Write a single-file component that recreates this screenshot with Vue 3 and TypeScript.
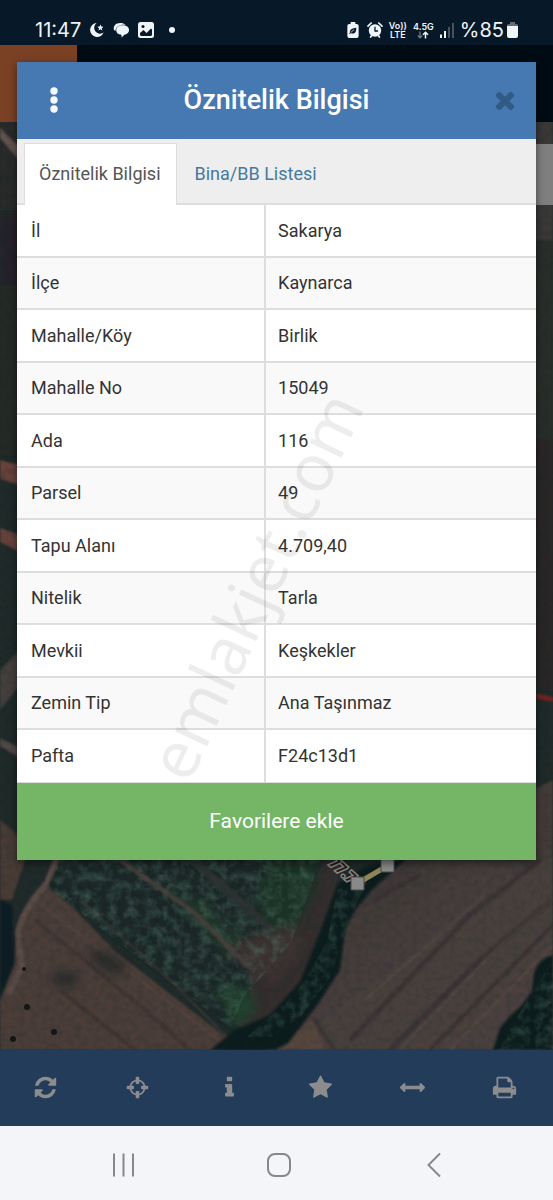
<script setup lang="ts">
interface Attribute {
  label: string
  value: string
}

interface Tool {
  name: string
  path: string
}

const attributes: Attribute[] = [
  { label: 'İl', value: 'Sakarya' },
  { label: 'İlçe', value: 'Kaynarca' },
  { label: 'Mahalle/Köy', value: 'Birlik' },
  { label: 'Mahalle No', value: '15049' },
  { label: 'Ada', value: '116' },
  { label: 'Parsel', value: '49' },
  { label: 'Tapu Alanı', value: '4.709,40' },
  { label: 'Nitelik', value: 'Tarla' },
  { label: 'Mevkii', value: 'Keşkekler' },
  { label: 'Zemin Tip', value: 'Ana Taşınmaz' },
  { label: 'Pafta', value: 'F24c13d1' },
]

const tools: Tool[] = [
  {
    name: 'Yenile',
    path: 'M1639 1056q0 5-1 7-64 268-268 434.5t-478 166.5q-146 0-282.5-55t-243.5-157l-129 129q-19 19-45 19t-45-19-19-45v-448q0-26 19-45t45-19h448q26 0 45 19t19 45-19 45l-137 137q71 66 161 102t187 36q134 0 250-65t186-179q11-17 53-117 8-23 30-23h192q13 0 22.5 9.5t9.5 22.5zm25-800v448q0 26-19 45t-45 19h-448q-26 0-45-19t-19-45 19-45l138-138q-148-137-349-137-134 0-250 65t-186 179q-11 17-53 117-8 23-30 23h-199q-13 0-22.5-9.5t-9.5-22.5v-7q65-268 270-434.5t480-166.5q146 0 284 55.5t245 156.5l130-129q19-19 45-19t45 19 19 45z',
  },
  {
    name: 'Konum',
    path: 'M1325 1024h-109q-26 0-45-19t-19-45v-128q0-26 19-45t45-19h109q-32-108-112.5-188.5t-188.5-112.5v109q0 26-19 45t-45 19h-128q-26 0-45-19t-19-45v-109q-108 32-188.5 112.5t-112.5 188.5h109q26 0 45 19t19 45v128q0 26-19 45t-45 19h-109q32 108 112.5 188.5t188.5 112.5v-109q0-26 19-45t45-19h128q26 0 45 19t19 45v109q108-32 188.5-112.5t112.5-188.5zm339-192v128q0 26-19 45t-45 19h-143q-37 161-154.5 278.5t-278.5 154.5v143q0 26-19 45t-45 19h-128q-26 0-45-19t-19-45v-143q-161-37-278.5-154.5t-154.5-278.5h-143q-26 0-45-19t-19-45v-128q0-26 19-45t45-19h143q37-161 154.5-278.5t278.5-154.5v-143q0-26 19-45t45-19h128q26 0 45 19t19 45v143q161 37 278.5 154.5t154.5 278.5h143q26 0 45 19t19 45z',
  },
  {
    name: 'Bilgi',
    path: 'M1216 1344v128q0 26-19 45t-45 19h-512q-26 0-45-19t-19-45v-128q0-26 19-45t45-19h64v-384h-64q-26 0-45-19t-19-45v-128q0-26 19-45t45-19h384q26 0 45 19t19 45v576h64q26 0 45 19t19 45zm-128-1152v192q0 26-19 45t-45 19h-256q-26 0-45-19t-19-45v-192q0-26 19-45t45-19h256q26 0 45 19t19 45z',
  },
  {
    name: 'Favoriler',
    path: 'M1728 647q0 22-26 48l-363 354 86 500q1 7 1 20 0 21-10.5 35.5t-30.5 14.5q-19 0-40-12l-449-236-449 236q-22 12-40 12-21 0-31.5-14.5t-10.5-35.5q0-6 2-20l86-500-364-354q-25-27-25-48 0-37 56-46l502-73 225-455q19-41 49-41t49 41l225 455 502 73q56 9 56 46z',
  },
  {
    name: 'Ölçüm',
    path: 'M1792 896q0 26-19 45l-256 256q-19 19-45 19t-45-19-19-45v-128h-1024v128q0 26-19 45t-45 19-45-19l-256-256q-19-19-19-45t19-45l256-256q19-19 45-19t45 19 19 45v128h1024v-128q0-26 19-45t45-19 45 19l256 256q19 19 19 45z',
  },
  {
    name: 'Yazdır',
    path: 'M448 1536h896v-256h-896v256zm0-640h896v-384h-160q-40 0-68-28t-28-68v-160h-640v640zm1152 64q0-26-19-45t-45-19-45 19-19 45 19 45 45 19 45-19 19-45zm128 0v416q0 13-9.5 22.5t-22.5 9.5h-224v160q0 40-28 68t-68 28h-960q-40 0-68-28t-28-68v-160h-224q-13 0-22.5-9.5t-9.5-22.5v-416q0-79 56.5-135.5t135.5-56.5h64v-544q0-40 28-68t68-28h672q40 0 88 20t76 48l152 152q28 28 48 76t20 88v256h64q79 0 135.5 56.5t56.5 135.5z',
  },
]
</script>

<template>
  <div class="screen">
    <header class="status">
      <div class="status-group">
        <span class="clock">11:47</span>
        <svg class="status-icon first" viewBox="0 0 16 16" aria-hidden="true">
          <path d="M7.600 1A7 7 0 1 0 14.600 10.600 5.400 5.400 0 0 1 7.600 1z" fill="#eef4f8" />
          <path d="M11.400 2.600l.9 2 2.200.2-1.700 1.400.5 2.200-1.900-1.200-1.900 1.200.5-2.200-1.700-1.400 2.200-.2z" fill="#eef4f8" />
        </svg>
        <svg class="status-icon wide" viewBox="0 0 18 16" aria-hidden="true">
          <path d="M1 8C0 3.500 3 .6 7.500.6c2.500 0 4.500.7 5.800 2C8 1.600 3 3.800 2.600 9z" fill="#eef4f8" />
          <path d="M10 3c4.200 0 7 2 7 5s-2.500 4.600-5 5l-2.800 3-.4-3C5.500 12.700 3.400 11 3.400 8.200 3.400 5 6.200 3 10 3z" fill="#eef4f8" />
        </svg>
        <svg class="status-icon" viewBox="0 0 16 16" aria-hidden="true">
          <rect width="16" height="16" rx="2.500" fill="#eef4f8" />
          <path d="M2 12.500V11l3.500-3 3 3L13 6.500l1 1v5a1.500 1.500 0 0 1-1.500 1.500h-9A1.500 1.500 0 0 1 2 12.500z" fill="#071829" />
          <circle cx="5" cy="4.600" r="1.500" fill="#071829" />
        </svg>
        <span class="more-dot"></span>
      </div>
      <div class="status-group right">
        <svg class="saver" viewBox="0 0 12 17" aria-hidden="true">
          <path d="M3.500 0h5v2H10a2 2 0 0 1 2 2v11a2 2 0 0 1-2 2H2a2 2 0 0 1-2-2V4a2 2 0 0 1 2-2h1.500z" fill="#eef4f8" />
          <path d="M9.500 6c0 4-1 6.200-4 6.200-.8 0-1.500-.2-2-.6L2.500 13l-.6-.7 1-1.200C2.300 8 5 6.500 9.500 6z" fill="#071829" />
          <path d="M3.800 11l3.500-3" stroke="#eef4f8" stroke-width=".8" />
        </svg>
        <svg class="alarm" viewBox="0 0 16 16" aria-hidden="true">
          <circle cx="8" cy="8.500" r="6.200" fill="#eef4f8" />
          <path d="M1 4.200L4.200 1M15 4.200L11.800 1M3.600 15l1.500-2M12.400 15l-1.500-2" stroke="#eef4f8" stroke-width="1.700" stroke-linecap="round" />
          <path d="M8 4.800V9h3" fill="none" stroke="#071829" stroke-width="1.300" />
        </svg>
        <span class="volte"><span>Vo))</span><span>LTE</span></span>
        <span class="network">
          <span>4.5G</span>
          <svg viewBox="0 0 12 7" aria-hidden="true">
            <path d="M3 0v6M.8 4L3 6.300 5.200 4" fill="none" stroke="#75818c" stroke-width="1.200" />
            <path d="M8.500 7V1M6 3.200L8.500.8 11 3.200" fill="none" stroke="#eef4f8" stroke-width="1.500" />
          </svg>
        </span>
        <svg class="signal" viewBox="0 0 14 15" aria-hidden="true">
          <path d="M0 11.500h2V15H0zM4 8h2v7H4z" fill="#eef4f8" />
          <path d="M8 4h2v11H8zM12 0h2v15h-2z" fill="#46525e" />
        </svg>
        <span class="charge">%85</span>
        <svg class="battery" viewBox="0 0 11 16" aria-hidden="true">
          <path d="M3 0h5v2h1.500A1.500 1.500 0 0 1 11 3.500V5H0V3.500A1.500 1.500 0 0 1 1.500 2H3z" fill="#626a72" />
          <path d="M0 4h11v10a2 2 0 0 1-2 2H2a2 2 0 0 1-2-2z" fill="#eef4f8" />
        </svg>
      </div>
    </header>

    <main class="stage">
      <svg class="map" viewBox="0 45 553 1005" preserveAspectRatio="xMidYMid slice" aria-hidden="true">
        <defs>
          <filter id="grain" x="0" y="0" width="100%" height="100%">
            <feTurbulence type="fractalNoise" baseFrequency=".16" numOctaves="4" seed="8" />
            <feColorMatrix values="0 0 0 0 0  0 0 0 0 0.02  0 0 0 0 0.02  1.800 0 0 0 -.7" />
          </filter>
          <filter id="leaves" x="0" y="0" width="100%" height="100%">
            <feTurbulence type="fractalNoise" baseFrequency=".11" numOctaves="3" seed="3" />
            <feColorMatrix values="0 0 0 0 .1  0 0 0 0 .22  0 0 0 0 .16  0 2 0 0 -.75" />
            <feComposite in2="SourceGraphic" operator="in" />
          </filter>
          <filter id="soft" x="-20%" y="-20%" width="140%" height="140%"><feGaussianBlur stdDeviation="5" /></filter>
          <filter id="edge"><feGaussianBlur stdDeviation="1" /></filter>
          <linearGradient id="field" x1="0" y1="0" x2="1" y2="1">
            <stop offset="0" stop-color="#3a3332" />
            <stop offset=".5" stop-color="#483f3d" />
            <stop offset="1" stop-color="#4e4240" />
          </linearGradient>
        </defs>
        <rect y="45" width="553" height="1005" fill="#202a29" />
        <g filter="url(#edge)">
          <path d="M0 120h20v90H0z" fill="#292a2c" />
          <path d="M0 128l20 20v13L0 138z" fill="#62534f" />
          <path d="M0 215h20v70H0z" fill="#262429" />
          <path d="M0 285h20v170H0z" fill="#262a25" />
          <path d="M0 460l20 5v20l-20-6zM0 528l20 7v17l-20-10z" fill="#68423a" />
          <path d="M0 670l20-20v35L0 710z" fill="#45413e" />
          <path d="M0 738l20 10v10L0 746z" fill="#514846" />
          <path d="M530 120h23v120h-23z" fill="#3a3838" />
          <path d="M530 240h23v200h-23z" fill="#292e2a" />
          <path d="M530 440h23v250h-23z" fill="#2a2725" />
          <path d="M536 694l17 3v5l-17-4z" fill="#7b211e" />
          <path d="M533 790l20-10v80h-20z" fill="#443b39" />
        </g>
        <g filter="url(#edge)">
          <path d="M0 820l30 25-18 55H0z" fill="#4a3a36" />
          <path d="M48 882C18 910 16 930 15 960L0 1002v48h220l15-6-120-93z" fill="#4c3d39" />
          <path d="M60 850L47 883Q20 912 18 935L22 967L8 995" fill="none" stroke="#5c4b46" stroke-width="6" />
          <path d="M61 858h260l-30 85-28 40-28 50-100-78-88-68z" fill="#1c2727" />
          <path d="M248 970l30-28 47-84h15l-5 60-15 40-35 46-35 28-15-8 15-25z" fill="#352e2f" />
          <path d="M390 858h163v192H288l35-75 22-80z" fill="url(#field)" />
          <path d="M263 1050l50-30 12 30z" fill="#57443c" />
        </g>
        <g filter="url(#soft)">
          <path d="M165 890l40 10 45 45-20 15z" fill="#22352a" />
          <path d="M270 858h50l-5 35-22 40-25 10-10-50z" fill="#1f3328" />
          <path d="M215 985l35 5 8 20-22 20z" fill="#23402d" />
          <path d="M225 950l30-15 35-10 15 20-30 40z" fill="#3c3131" />
        </g>
        <path d="M61 858h260l-30 85-48 55-12 30-96-73-88-68z" filter="url(#leaves)" opacity=".45" />
        <path d="M120 860l75 53 55 55" fill="none" stroke="#4b413e" stroke-width="4" filter="url(#edge)" />
        <path d="M190 858l80 70" fill="none" stroke="#2d3330" stroke-width="8" filter="url(#edge)" />
        <g fill="none" stroke="#302a2b" stroke-opacity=".6" filter="url(#edge)">
          <path d="M350 1040l120-125 70-55M390 1050l90-90 73-60" stroke-width="4" />
          <path d="M430 1050l123-125M375 900l45-25M313 1018l22 32" stroke-width="3" />
          <path d="M35 920l110 90 45 40M60 990l75 60" stroke-width="2" />
        </g>
        <g fill="none" stroke="#66554f" stroke-opacity=".35" stroke-width="2" filter="url(#edge)">
          <path d="M400 1050l100-105 53-45M450 1050l103-105M365 1000l120-105M35 900l190 145M80 900l90 80 60 60" />
        </g>
        <g fill="#0c1a1f" filter="url(#edge)">
          <path d="M337 885q20-15 35-20l35-7-35 32-17 20-10 20-5 40-22 34-30 39-13 7H210l25-20 35-15 30-33 20-50z" />
          <path d="M553 955q-14 4-19 18l-2 18-10 14-12 11-10 12-7 22h60z" />
          <path d="M0 900l12 5 2 60-14 30z" fill="#111d20" />
        </g>
        <g filter="url(#soft)" fill="#172122" opacity=".65">
          <ellipse cx="108" cy="962" rx="20" ry="8" transform="rotate(28 108 962)" />
          <ellipse cx="65" cy="979" rx="14" ry="7" />
        </g>
        <g fill="#161516">
          <circle cx="27" cy="1007" r="3" /><circle cx="54" cy="1032" r="3" /><circle cx="13" cy="1039" r="3" /><circle cx="24" cy="969" r="2" />
        </g>
        <path d="M337 890l35-20-25 55-15 50-30 40-30 22h-25l50-45 30-50zM553 960l-20 30-35 60h55z" filter="url(#leaves)" opacity=".35" />
        <rect y="122" width="553" height="928" filter="url(#grain)" opacity=".2" />
        <text x="328" y="864" transform="rotate(42 328 864)" class="distance">77.71</text>
        <path d="M358 883l29-17" stroke="#8d8659" stroke-width="5" />
        <path d="M351 877h13v13h-13zM381 859h13v13h-13z" fill="#898989" stroke="#4b4b4b" />
        <rect y="45" width="553" height="77" fill="#010b14" />
        <rect y="45" width="77" height="77" fill="#7a4124" />
        <rect x="534" y="144" width="19" height="61" fill="#7f7f7f" />
      </svg>

      <section class="dialog" role="dialog" aria-labelledby="dialog-title">
        <div class="dialog-head">
          <button class="head-button" type="button" aria-label="Menü">
            <svg class="dots" viewBox="0 0 8 26" aria-hidden="true">
              <circle cx="4" cy="4" r="3.700" /><circle cx="4" cy="13" r="3.700" /><circle cx="4" cy="22" r="3.700" />
            </svg>
          </button>
          <h1 id="dialog-title">Öznitelik Bilgisi</h1>
          <button class="head-button" type="button" aria-label="Kapat">
            <svg class="close" viewBox="0 0 1792 1792" aria-hidden="true">
              <path d="M1490 1322q0 40-28 68l-136 136q-28 28-68 28t-68-28l-294-294-294 294q-28 28-68 28t-68-28l-136-136q-28-28-28-68t28-68l294-294-294-294q-28-28-28-68t28-68l136-136q28-28 68-28t68 28l294 294 294-294q28-28 68-28t68 28l136 136q28 28 28 68t-28 68l-294 294 294 294q28 28 28 68z" />
            </svg>
          </button>
        </div>
        <div class="tabs" role="tablist">
          <button class="tab active" type="button" role="tab" aria-selected="true">Öznitelik Bilgisi</button>
          <button class="tab" type="button" role="tab" aria-selected="false">Bina/BB Listesi</button>
        </div>
        <div class="panel" role="tabpanel">
          <table>
            <tbody>
              <tr v-for="item in attributes" :key="item.label">
                <th scope="row">{{ item.label }}</th>
                <td>{{ item.value }}</td>
              </tr>
            </tbody>
          </table>
          <svg class="watermark" viewBox="0 0 519 578" aria-hidden="true">
            <text x="172" y="580" transform="rotate(-65 172 580)">emlakjet.com</text>
          </svg>
        </div>
        <button class="favorite" type="button">Favorilere ekle</button>
      </section>
    </main>

    <nav class="toolbar" aria-label="Harita araçları">
      <button v-for="tool in tools" :key="tool.name" type="button" :aria-label="tool.name">
        <svg viewBox="0 0 1792 1792" aria-hidden="true"><path :d="tool.path" /></svg>
      </button>
    </nav>

    <nav class="system" aria-label="Sistem">
      <button type="button" aria-label="Son uygulamalar">
        <svg viewBox="0 0 26 26" aria-hidden="true"><path d="M3 1.500v23M12.500 1.500v23M22 1.500v23" /></svg>
      </button>
      <button type="button" aria-label="Ana ekran">
        <svg viewBox="0 0 26 26" aria-hidden="true"><rect x="2" y="2" width="22" height="22" rx="7" /></svg>
      </button>
      <button type="button" aria-label="Geri">
        <svg viewBox="0 0 26 26" aria-hidden="true"><path d="M19 1.500L7.500 13 19 24.500" /></svg>
      </button>
    </nav>
  </div>
</template>

<style>
body {
  margin: 0;
}
</style>

<style scoped>
.screen {
  display: flex;
  flex-direction: column;
  min-height: 100vh;
  font-family: Roboto, "Liberation Sans", sans-serif;
  color: #333;
}

button {
  display: flex;
  align-items: center;
  justify-content: center;
  margin: 0;
  padding: 0;
  border: 0;
  background: none;
  font: inherit;
  color: inherit;
  cursor: pointer;
}

svg {
  display: block;
  flex: none;
}

.status {
  display: flex;
  align-items: center;
  justify-content: space-between;
  box-sizing: border-box;
  height: 45px;
  padding: 15px 35px 0 35px;
  background: #071829;
  color: #eef4f8;
  font-family: Inter, Roboto, sans-serif;
}

.status-group {
  display: flex;
  align-items: center;
  gap: 8px;
}

.clock,
.charge {
  font-size: 20px;
  line-height: 24px;
}

.status-icon {
  width: 16px;
  height: 16px;
}

.status-icon.wide {
  width: 17px;
}

.more-dot {
  width: 6px;
  height: 6px;
  margin-left: 7px;
  border-radius: 50%;
  background: #eef4f8;
}

.right {
  gap: 6px;
}

.saver {
  width: 12px;
  height: 16px;
  margin-right: 2px;
}

.alarm {
  width: 16px;
  height: 16px;
}

.volte,
.network {
  display: flex;
  flex-direction: column;
  align-items: center;
  font-size: 9px;
  font-weight: 600;
  line-height: 9px;
}

.network svg {
  width: 12px;
  height: 8px;
}

.signal {
  width: 14px;
  height: 15px;
}

.battery {
  width: 11px;
  height: 16px;
  margin-left: -3px;
}

.stage {
  position: relative;
  flex: 1;
  padding: 17px 17px 190px;
}

.map {
  position: absolute;
  inset: 0;
  width: 100%;
  height: 100%;
}

.distance {
  font: 700 15px Roboto, sans-serif;
  fill: #1e1d1c;
  stroke: #8c8582;
  stroke-width: 3px;
  paint-order: stroke;
}

.dialog {
  position: relative;
  background: #fff;
  box-shadow: 0 3px 8px rgba(0, 0, 0, 0.5);
}

.dialog-head {
  display: grid;
  grid-template-columns: 74px 1fr 74px;
  box-sizing: border-box;
  height: 77px;
  padding-bottom: 2px;
  align-items: center;
  background: #4678b2;
  color: #fff;
}

.dialog-head h1 {
  margin: 0;
  font-size: 27px;
  font-weight: 500;
  line-height: 32px;
  text-align: center;
}

.head-button {
  height: 75px;
}

.head-button:last-child {
  padding-left: 12px;
}

.dots {
  width: 8px;
  height: 26px;
  fill: #f4fbff;
}

.close {
  width: 28px;
  height: 28px;
  fill: #315a85;
}

.tabs {
  display: flex;
  box-sizing: border-box;
  height: 66px;
  padding: 4px 7px 0;
  border-bottom: 2px solid #ddd;
  background: #eee;
}

.tab {
  box-sizing: border-box;
  height: 60px;
  padding: 0 17px;
  border: 1px solid transparent;
  border-bottom: 0;
  font-size: 18px;
  line-height: 24px;
  color: #46799f;
}

.tab.active {
  height: 62px;
  padding: 0 15px 2px 14px;
  border-color: #ddd;
  background: #fff;
  color: #555;
}

.panel {
  position: relative;
}

table {
  width: 100%;
  table-layout: fixed;
  border-collapse: separate;
  border-spacing: 0;
  font-size: 18px;
  line-height: 24px;
}

th,
td {
  box-sizing: border-box;
  height: 52px;
  padding: 0 13px;
  border-bottom: 2px solid #ddd;
  font-weight: 400;
  text-align: left;
}

th {
  width: 48%;
  padding-left: 14px;
  border-right: 2px solid #ddd;
}

td {
  padding-left: 12px;
}

tr:nth-child(odd) > * {
  height: 53px;
}

tr:nth-child(even) > * {
  background: #f9f9f9;
}

tr:last-child > * {
  border-bottom-width: 1px;
}

.watermark {
  position: absolute;
  inset: 0;
  width: 100%;
  height: 100%;
  overflow: visible;
  pointer-events: none;
}

.watermark text {
  font: 400 66px "Noto Sans", "Open Sans", sans-serif;
  fill: rgba(0, 0, 0, 0.07);
}

.favorite {
  width: 100%;
  height: 77px;
  padding-bottom: 2px;
  background: #74b566;
  color: #fff;
  font-size: 21px;
  line-height: 28px;
}

.toolbar {
  display: grid;
  grid-template-columns: repeat(6, 1fr);
  box-sizing: border-box;
  height: 76px;
  padding: 0 3px 2px 0;
  background: #233c5a;
}

.toolbar svg {
  width: 25px;
  height: 25px;
  fill: #8c8c8f;
}

.system {
  display: grid;
  grid-template-columns: repeat(3, 1fr);
  box-sizing: border-box;
  height: 74px;
  padding: 3px 42px 0 46px;
  background: #f4f5f8;
}

.system svg {
  width: 26px;
  height: 26px;
  fill: none;
  stroke: #87888b;
  stroke-width: 2;
}
</style>
